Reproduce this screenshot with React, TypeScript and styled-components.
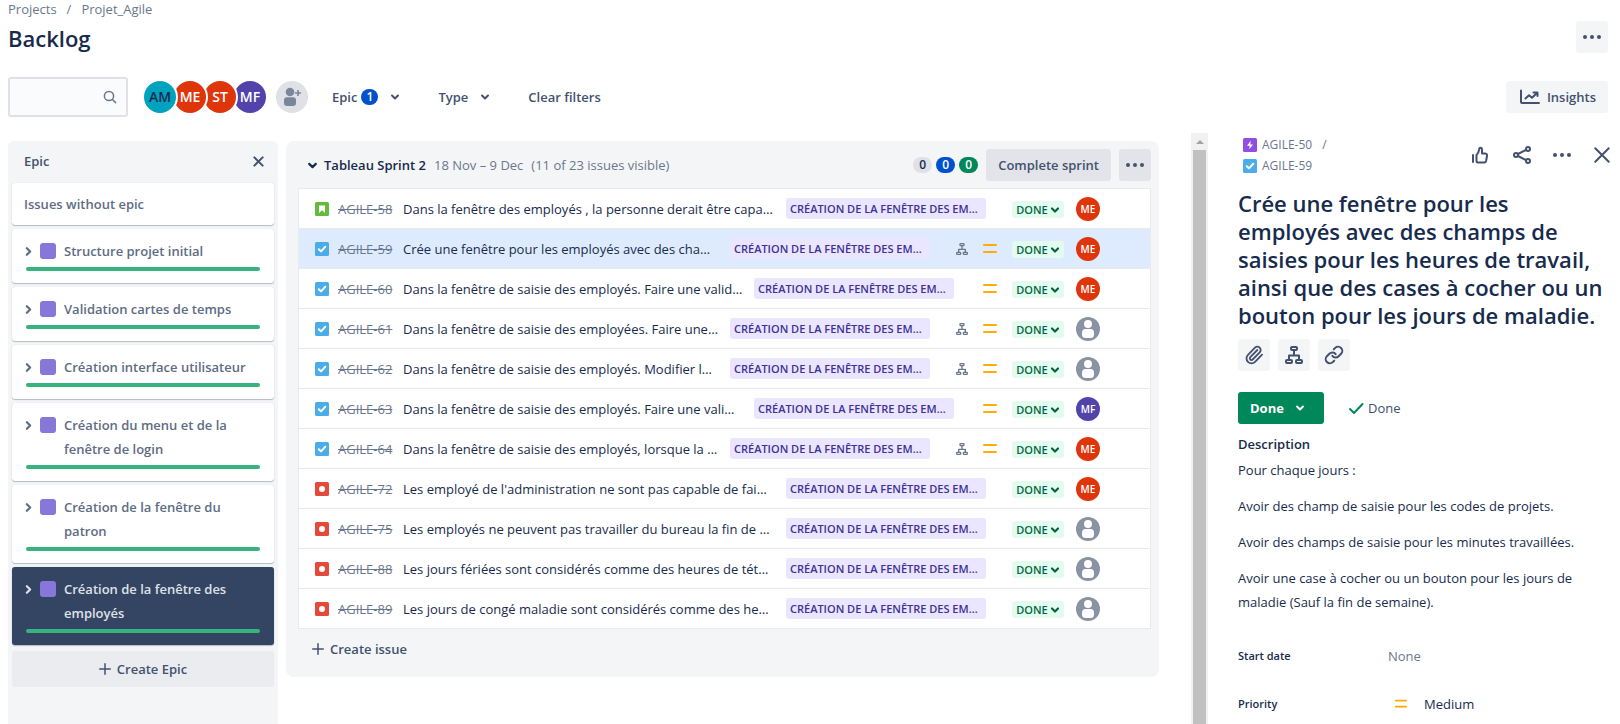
import React from "react";
import styled, { createGlobalStyle } from "styled-components";

const font = `"Open Sans", "Noto Sans", "Liberation Sans", sans-serif`;

const c = {
  ink: "#172B4D",
  text: "#42526E",
  muted: "#6B778C",
  panel: "#F4F5F7",
  line: "#E9EAEE",
  green: "#00875A",
  bar: "#36B37E",
  epic: "#8777D9",
};

const GlobalStyle = createGlobalStyle`
  *, *::before, *::after { box-sizing: border-box; }
  body { margin: 0; background: #fff; color: ${c.ink}; font: 13px/20px ${font}; }
  button, input { font: inherit; color: inherit; }
  button { border: 0; padding: 0; background: none; cursor: pointer; }
  a { color: inherit; text-decoration: none; }
  h1, h2, h3, p, ul, ol, dl, dd { margin: 0; padding: 0; list-style: none; }
  svg { display: block; flex: none; }
`;

/* ---------- icons ---------- */

const Chevron = ({ size = 10, dir = "down", width = 2 }: { size?: number; dir?: "down" | "right"; width?: number }) => (
  <svg width={size} height={size} viewBox="0 0 10 10" fill="none" stroke="currentColor" strokeWidth={width} strokeLinecap="round" strokeLinejoin="round">
    <path d={dir === "down" ? "M2 3.5 5 6.5 8 3.5" : "M3.5 2 6.5 5 3.5 8"} />
  </svg>
);

const Dots = () => (
  <svg width="20" height="20" viewBox="0 0 20 20" fill="currentColor">
    <circle cx="3" cy="10" r="2" />
    <circle cx="10" cy="10" r="2" />
    <circle cx="17" cy="10" r="2" />
  </svg>
);

const Cross = ({ size, width }: { size: number; width: number }) => (
  <svg width={size} height={size} viewBox="0 0 16 16" fill="none" stroke="currentColor" strokeWidth={width} strokeLinecap="round">
    <path d="M2 2 14 14M14 2 2 14" />
  </svg>
);

const Plus = () => (
  <svg width="12" height="12" viewBox="0 0 12 12" fill="none" stroke="currentColor" strokeWidth="1.5" strokeLinecap="round">
    <path d="M6 .75v10.5M.75 6h10.5" />
  </svg>
);

const SearchIcon = () => (
  <svg width="14" height="14" viewBox="0 0 14 14" fill="none" stroke={c.muted} strokeWidth="1.5" strokeLinecap="round">
    <circle cx="6" cy="6" r="4.6" />
    <path d="M9.5 9.5 12.6 12.6" />
  </svg>
);

const AddPerson = () => (
  <svg width="18" height="20" viewBox="0 0 18 20" fill="#7A869A">
    <circle cx="7" cy="5" r="4.3" />
    <path d="M1 13.2a3 3 0 0 1 3-3h6a3 3 0 0 1 3 3V16a3 3 0 0 1-3 3H4a3 3 0 0 1-3-3z" />
    <path d="M14.2 3h1.6v2.2H18v1.6h-2.2V9h-1.6V6.8h-2.2V5.2h2.2z" />
  </svg>
);

const ChartIcon = () => (
  <svg width="20" height="16" viewBox="0 0 20 16" fill="none" stroke="currentColor" strokeWidth="2" strokeLinecap="round" strokeLinejoin="round">
    <path d="M1 1.5V13a1 1 0 0 0 1 1H19" />
    <path d="M5.5 9.5 9 6.2l3 2.6L17 4M13.5 3.5H17.5V7" />
  </svg>
);

const Tile = ({ kind }: { kind: IssueKind | "epic" }) => {
  const fill = { story: "#63BA3C", task: "#4BADE8", bug: "#E5493A", epic: "#904EE2" }[kind];
  return (
    <svg width="14" height="14" viewBox="0 0 14 14">
      <rect width="14" height="14" rx="1.5" fill={fill} />
      {kind === "story" && <path d="M4 3.5h6v7.5L7 8.3 4 11z" fill="#fff" />}
      {kind === "task" && <path d="M3.8 7.3 6 9.4 10.3 4.7" fill="none" stroke="#fff" strokeWidth="2" strokeLinecap="round" strokeLinejoin="round" />}
      {kind === "bug" && <circle cx="7" cy="7" r="3" fill="#fff" />}
      {kind === "epic" && <path d="M7.7 2.8 4 7.7h2.7L6.3 11.2 10 6.4H7.3z" fill="#fff" />}
    </svg>
  );
};

const Tree = ({ size, color = "currentColor" }: { size: number; color?: string }) => (
  <svg width={size} height={size} viewBox="0 0 18 18" fill="none" stroke={color} strokeWidth="2" strokeLinejoin="round">
    <rect x="6" y="1" width="6" height="3" rx="1" />
    <rect x="1" y="14" width="6" height="3" rx="1" />
    <rect x="11" y="14" width="6" height="3" rx="1" />
    <path d="M9 4.5V9M4 14V9.5H14V14" />
  </svg>
);

const Medium = ({ size = 16 }: { size?: number }) => (
  <svg width={size} height={size} viewBox="0 0 16 16" fill="none" stroke="#FFAB00" strokeWidth="2" strokeLinecap="round">
    <path d="M2 4H14M2 11H14" />
  </svg>
);

const Nobody = () => (
  <svg width="24" height="24" viewBox="0 0 24 24">
    <circle cx="12" cy="12" r="12" fill="#8993A4" />
    <circle cx="12" cy="7" r="4" fill="#fff" />
    <rect x="6" y="12" width="12" height="9" rx="3.5" fill="#fff" />
  </svg>
);

const Thumb = () => (
  <svg width="20" height="18" viewBox="0 0 20 18" fill="none" stroke="currentColor" strokeWidth="2" strokeLinejoin="round" strokeLinecap="round">
    <path d="M1 9v7" />
    <path d="M4.500 9v6a1.500 1.500 0 0 0 1.500 1.500h6.200a2 2 0 0 0 1.900-1.500l.9-5a2 2 0 0 0-2-2.500H10V4c0-1.300-.6-2.200-1.500-2.200S7.200 2.500 7 4L6.300 6.500z" />
  </svg>
);

const Share = () => (
  <svg width="20" height="20" viewBox="0 0 20 20" fill="none" stroke="currentColor" strokeWidth="2">
    <circle cx="4" cy="10" r="2" />
    <circle cx="16" cy="4" r="2" />
    <circle cx="16" cy="16" r="2" />
    <path d="M6 9 14 5M6 11 14 15" />
  </svg>
);

const Clip = () => (
  <svg width="20" height="20" viewBox="0 0 24 24" fill="none" stroke="currentColor" strokeWidth="2.2" strokeLinecap="round">
    <path d="m16 6-8.414 8.586a2 2 0 0 0 2.829 2.829l8.414-8.586a4 4 0 1 0-5.657-5.657l-8.379 8.551a6 6 0 1 0 8.485 8.485l8.379-8.551" />
  </svg>
);

const LinkIcon = () => (
  <svg width="20" height="20" viewBox="0 0 24 24" fill="none" stroke="currentColor" strokeWidth="2.4" strokeLinecap="round">
    <path d="M10 13a5 5 0 0 0 7.54.54l3-3a5 5 0 0 0-7.07-7.07l-1.72 1.71" />
    <path d="M14 11a5 5 0 0 0-7.54-.54l-3 3a5 5 0 0 0 7.07 7.07l1.71-1.71" />
  </svg>
);

const Check = () => (
  <svg width="16" height="16" viewBox="0 0 16 16" fill="none" stroke={c.green} strokeWidth="2" strokeLinecap="round" strokeLinejoin="round">
    <path d="M2 9 6 13 14.5 4" />
  </svg>
);

/* ---------- page frame ---------- */

const Page = styled.div`
  min-height: 100vh;
  display: flex;
  flex-direction: column;
`;

const Top = styled.header`
  padding: 0 12px 0 8px;
`;

const Crumbs = styled.nav`
  display: flex;
  gap: 10px;
  height: 21px;
  line-height: 18px;
  color: ${c.muted};
`;

const TitleRow = styled.div`
  display: flex;
  align-items: center;
  justify-content: space-between;
  margin-bottom: 24px;
`;

const PageTitle = styled.h1`
  padding-top: 2px;
  font-size: 22px;
  line-height: 30px;
  font-weight: 600;
`;

const IconButton = styled.button<{ $tone?: string }>`
  width: 32px;
  height: 32px;
  display: grid;
  place-items: center;
  border-radius: 3px;
  color: ${c.text};
  background: ${(p) => p.$tone ?? "transparent"};
`;

const Filters = styled.div`
  display: flex;
  align-items: center;
  height: 40px;
  margin-bottom: 16px;
  color: ${c.text};
`;

const SearchBox = styled.label`
  display: flex;
  align-items: center;
  width: 120px;
  height: 40px;
  padding: 0 9px 0 6px;
  border: 2px solid #dfe1e6;
  border-radius: 3px;
  background: #fafbfc;

  input {
    flex: 1;
    min-width: 0;
    border: 0;
    outline: 0;
    background: transparent;
  }
`;

const Team = styled.div`
  display: flex;
  margin-left: 16px;
  gap: 10px;
`;

const Stack = styled.div`
  display: flex;
  isolation: isolate;
`;

const Avatar = styled.span<{ $bg: string; $fg?: string; $small?: boolean; $level?: number }>`
  position: relative;
  z-index: ${(p) => p.$level ?? 0};
  display: grid;
  place-items: center;
  flex: none;
  width: ${(p) => (p.$small ? 24 : 32)}px;
  height: ${(p) => (p.$small ? 24 : 32)}px;
  border-radius: 50%;
  background: ${(p) => p.$bg};
  color: ${(p) => p.$fg ?? "#fff"};
  font-size: ${(p) => (p.$small ? 10 : 14)}px;
  font-weight: 600;
  ${(p) => !p.$small && "box-shadow: 0 0 0 2px #fff; & + & { margin-left: -2px; }"}
`;

const AddPeople = styled(IconButton)`
  border-radius: 50%;
`;

const FilterButton = styled.button`
  display: flex;
  align-items: center;
  height: 32px;
  padding: 0 12px;
  gap: 12px;
  font-weight: 600;
`;

const FilterGroup = styled.div`
  display: flex;
  flex: 1;
  gap: 14px;
  margin-left: 12px;
`;

const FilterLabel = styled.span`
  display: flex;
  align-items: center;
  gap: 4px;
`;

const CountDot = styled.span`
  min-width: 17px;
  height: 16px;
  border-radius: 8px;
  background: #0052cc;
  color: #fff;
  font-size: 12px;
  line-height: 16px;
  font-weight: 600;
  text-align: center;
`;

const Insights = styled.button`
  display: flex;
  align-items: center;
  gap: 7px;
  height: 32px;
  padding: 0 12px 0 14px;
  border-radius: 3px;
  background: ${c.panel};
  font-weight: 600;
`;

const Main = styled.main`
  flex: 1;
  display: flex;
  padding-left: 8px;
`;

/* ---------- epic column ---------- */

const EpicPanel = styled.aside`
  flex: none;
  width: 270px;
  margin-top: 8px;
  padding: 0 4px;
  border-radius: 6px 6px 0 0;
  background: ${c.panel};
`;

const EpicHead = styled.div`
  display: flex;
  align-items: center;
  justify-content: space-between;
  height: 42px;
  padding: 0 8px 2px 12px;
  color: ${c.text};

  h2 {
    font-size: 13px;
    font-weight: 600;
  }
`;

const CloseSmall = styled.button`
  width: 16px;
  height: 16px;
  display: grid;
  place-items: center;
`;

const EpicList = styled.ul`
  display: flex;
  flex-direction: column;
  gap: 4px;
`;

const EpicCard = styled.li<{ $active?: boolean }>`
  padding: 10px 14px 12px;
  border-radius: 3px;
  background: ${(p) => (p.$active ? "#344563" : "#fff")};
  color: ${(p) => (p.$active ? "#DFE1E6" : "#5E6C84")};
  box-shadow: 0 1px 1px rgba(9, 30, 66, 0.25), 0 0 1px rgba(9, 30, 66, 0.2);
  font-weight: 600;
  line-height: 24px;
`;

const NoEpicCard = styled(EpicCard)`
  padding: 9px 12px;
`;

const EpicName = styled.div`
  display: flex;
  align-items: flex-start;

  button {
    height: 24px;
    margin: 0 6px 0 -3px;
  }
`;

const Swatch = styled.span`
  flex: none;
  width: 16px;
  height: 16px;
  margin: 4px 8px 0 0;
  border-radius: 3px;
  background: ${c.epic};
`;

const Progress = styled.div`
  height: 4px;
  margin-top: 4px;
  border-radius: 2px;
  background: ${c.bar};
`;

const CreateEpic = styled.button`
  display: flex;
  align-items: center;
  justify-content: center;
  gap: 6px;
  width: 100%;
  height: 36px;
  margin-top: 6px;
  border-radius: 3px;
  background: #ebecf0;
  color: ${c.text};
  font-weight: 600;
`;

/* ---------- sprint ---------- */

const Sprint = styled.section`
  flex: 1;
  min-width: 0;
  align-self: flex-start;
  margin: 8px 32px 0 8px;
  padding: 8px 8px 0 12px;
  border-radius: 8px;
  background: ${c.panel};
`;

const SprintHead = styled.div`
  display: flex;
  align-items: center;
  gap: 8px;
  margin-bottom: 7px;
  padding-left: 9px;
  color: ${c.muted};

  button {
    flex: none;
  }
`;

const SprintToggle = styled.button`
  display: flex;
  align-items: center;
  gap: 6px;
  color: ${c.ink};
  font-weight: 600;
`;

const Tallies = styled.div`
  display: flex;
  gap: 4px;
  margin-left: auto;
`;

const Tally = styled.span<{ $bg: string; $fg: string }>`
  width: 19px;
  height: 16px;
  border-radius: 8px;
  background: ${(p) => p.$bg};
  color: ${(p) => p.$fg};
  font-size: 12px;
  line-height: 16px;
  font-weight: 600;
  text-align: center;
`;

const SprintButton = styled.button`
  height: 32px;
  padding: 0 12px;
  border-radius: 3px;
  background: #e2e4e9;
  color: ${c.text};
  font-weight: 600;
`;

const IssueList = styled.ul`
  border: 1px solid ${c.line};
  border-bottom: 0;
  background: #fff;
`;

const Row = styled.li<{ $active?: boolean }>`
  display: flex;
  align-items: center;
  height: 40px;
  padding: 0 50px 0 16px;
  border-bottom: 1px solid ${c.line};
  background: ${(p) => (p.$active ? "#DEEBFF" : "#fff")};
`;

const Key = styled.a`
  flex: none;
  width: 57px;
  margin: 0 8px 0 9px;
  color: ${c.muted};
  text-decoration: line-through;
`;

const Summary = styled.span`
  flex: 1;
  min-width: 0;
  margin-right: 6px;
  overflow: hidden;
  white-space: nowrap;
`;

const EpicTag = styled.span`
  flex: none;
  width: 200px;
  height: 21px;
  margin-right: 26px;
  padding: 0 4px;
  border-radius: 3px;
  background: #eae6ff;
  color: #403294;
  font-size: 11px;
  line-height: 21px;
  font-weight: 600;
  white-space: nowrap;
  overflow: hidden;
`;

const Slot = styled.span<{ $w: number }>`
  flex: none;
  width: ${(p) => p.$w}px;
  padding-left: ${(p) => (p.$w > 24 ? 2 : 0)}px;
`;

const Status = styled.button`
  display: flex;
  align-items: center;
  justify-content: center;
  gap: 2px;
  flex: none;
  width: 52px;
  height: 17px;
  margin: 2px 12px 0 0;
  border-radius: 3px;
  background: #e3fcef;
  color: #006644;
  font-size: 11px;
  line-height: 16px;
  font-weight: 600;
`;

const CreateIssue = styled.button`
  display: flex;
  align-items: center;
  gap: 6px;
  height: 40px;
  margin-bottom: 8px;
  padding-left: 14px;
  color: ${c.text};
  font-weight: 600;
`;

/* ---------- detail ---------- */

const Track = styled.div`
  flex: none;
  display: flex;
  flex-direction: column;
  width: 17px;
  background: #f1f1f1;
`;

const TrackArrow = styled.div`
  display: grid;
  place-items: center;
  height: 17px;
`;

const TrackThumb = styled.div`
  flex: 1;
  margin: 0 2px;
  background: #c1c1c1;
`;

const Detail = styled.section`
  flex: none;
  width: 412px;
  padding: 0 2px 0 30px;
`;

const DetailHead = styled.div`
  display: flex;
  justify-content: space-between;
  height: 56px;
`;

const Path = styled.nav`
  display: flex;
  flex-direction: column;
  gap: 1px;
  padding: 2px 0 0 5px;
  color: ${c.muted};
  font-size: 12px;
`;

const PathItem = styled.div`
  display: flex;
  align-items: center;
  gap: 5px;

  span {
    margin-left: 5px;
  }
`;

const Actions = styled.div<{ $top: number }>`
  display: flex;
  gap: 8px;
  padding-top: ${(p) => p.$top}px;
`;

const IssueTitle = styled.h2`
  padding-right: 8px;
  font-size: 22px;
  line-height: 28px;
  font-weight: 600;
`;

const StateRow = styled.div`
  display: flex;
  align-items: center;
  gap: 24px;
  margin: 21px 0 8px;
  color: ${c.text};
`;

const StateButton = styled.button`
  display: flex;
  align-items: center;
  gap: 11px;
  width: 86px;
  height: 32px;
  padding: 0 12px;
  border-radius: 3px;
  background: ${c.green};
  color: #fff;
  font-weight: 700;
`;

const Resolution = styled.span`
  display: flex;
  align-items: center;
  gap: 4px;
`;

const Heading = styled.h3`
  font-size: 13px;
  line-height: 24px;
  font-weight: 600;
`;

const Prose = styled.div`
  margin: 2px 12px 30px 0;
  line-height: 24px;

  p + p {
    margin-top: 12px;
  }
`;

const Fields = styled.dl`
  display: grid;
  grid-template-columns: 150px 1fr;
  row-gap: 24px;
  line-height: 24px;

  dt {
    font-size: 11px;
    font-weight: 600;
  }
`;

const Unset = styled.dd`
  color: ${c.muted};
`;

const PriorityValue = styled.dd`
  display: flex;
  align-items: center;
  gap: 16px;
  padding-left: 6px;
`;

/* ---------- data ---------- */

type IssueKind = "story" | "task" | "bug";

interface Issue {
  id: number;
  kind: IssueKind;
  text: string;
  who?: "ME" | "MF";
  tree?: boolean;
  priority?: boolean;
  active?: boolean;
}

const people = [
  { id: "AM", bg: "#00A3BF", fg: c.ink },
  { id: "ME", bg: "#DE350B" },
  { id: "ST", bg: "#DE350B" },
  { id: "MF", bg: "#5243AA" },
];

const epics = [
  "Structure projet initial",
  "Validation cartes de temps",
  "Création interface utilisateur",
  "Création du menu et de la fenêtre de login",
  "Création de la fenêtre du patron",
  "Création de la fenêtre des employés",
];

const issues: Issue[] = [
  { id: 58, kind: "story", text: "Dans la fenêtre des employés , la personne derait être capa…", who: "ME" },
  { id: 59, kind: "task", text: "Crée une fenêtre pour les employés avec des cha…", who: "ME", tree: true, priority: true, active: true },
  { id: 60, kind: "task", text: "Dans la fenêtre de saisie des employés. Faire une valid…", who: "ME", priority: true },
  { id: 61, kind: "task", text: "Dans la fenêtre de saisie des employées. Faire une…", tree: true, priority: true },
  { id: 62, kind: "task", text: "Dans la fenêtre de saisie des employés. Modifier l…", tree: true, priority: true },
  { id: 63, kind: "task", text: "Dans la fenêtre de saisie des employés. Faire une vali…", who: "MF", priority: true },
  { id: 64, kind: "task", text: "Dans la fenêtre de saisie des employés, lorsque la …", who: "ME", tree: true, priority: true },
  { id: 72, kind: "bug", text: "Les employé de l'administration ne sont pas capable de fai…", who: "ME" },
  { id: 75, kind: "bug", text: "Les employés ne peuvent pas travailler du bureau la fin de …" },
  { id: 88, kind: "bug", text: "Les jours fériées sont considérés comme des heures de tét…" },
  { id: 89, kind: "bug", text: "Les jours de congé maladie sont considérés comme des he…" },
];

const IssueRow = ({ issue }: { issue: Issue }) => (
  <Row $active={issue.active}>
    <Tile kind={issue.kind} />
    <Key href={`#AGILE-${issue.id}`}>AGILE-{issue.id}</Key>
    <Summary>{issue.text}</Summary>
    <EpicTag>CRÉATION DE LA FENÊTRE DES EM…</EpicTag>
    {issue.tree && (
      <Slot $w={24}>
        <Tree size={12} color={c.muted} />
      </Slot>
    )}
    {issue.priority && (
      <Slot $w={32}>
        <Medium />
      </Slot>
    )}
    <Status>
      DONE
      <Chevron size={10} width={2.2} />
    </Status>
    {issue.who ? (
      <Avatar $small $bg={issue.who === "ME" ? "#DE350B" : "#5243AA"}>
        {issue.who}
      </Avatar>
    ) : (
      <Nobody />
    )}
  </Row>
);

export default function App() {
  return (
    <Page>
      <GlobalStyle />
      <Top>
        <Crumbs aria-label="Breadcrumb">
          <a href="#projects">Projects</a>
          <span>/</span>
          <a href="#project">Projet_Agile</a>
        </Crumbs>
        <TitleRow>
          <PageTitle>Backlog</PageTitle>
          <IconButton $tone={c.panel} aria-label="More actions">
            <Dots />
          </IconButton>
        </TitleRow>
        <Filters>
          <SearchBox>
            <input type="text" aria-label="Search backlog" />
            <SearchIcon />
          </SearchBox>
          <Team>
            <Stack>
              {people.map((p, i) => (
                <Avatar key={p.id} $bg={p.bg} $fg={p.fg} $level={people.length - i}>
                  {p.id}
                </Avatar>
              ))}
            </Stack>
            <AddPeople $tone="#DFE1E6" aria-label="Add people">
              <AddPerson />
            </AddPeople>
          </Team>
          <FilterGroup>
            <FilterButton>
              <FilterLabel>
                Epic <CountDot>1</CountDot>
              </FilterLabel>
              <Chevron />
            </FilterButton>
            <FilterButton>
              Type
              <Chevron />
            </FilterButton>
            <FilterButton>Clear filters</FilterButton>
          </FilterGroup>
          <Insights>
            <ChartIcon />
            Insights
          </Insights>
        </Filters>
      </Top>

      <Main>
        <EpicPanel>
          <EpicHead>
            <h2>Epic</h2>
            <CloseSmall aria-label="Close epic panel">
              <Cross size={11} width={3} />
            </CloseSmall>
          </EpicHead>
          <EpicList>
            <NoEpicCard>Issues without epic</NoEpicCard>
            {epics.map((name, i) => (
              <EpicCard key={name} $active={i === epics.length - 1}>
                <EpicName>
                  <button aria-label={`Expand ${name}`}>
                    <Chevron size={11} dir="right" />
                  </button>
                  <Swatch />
                  <span>{name}</span>
                </EpicName>
                <Progress />
              </EpicCard>
            ))}
          </EpicList>
          <CreateEpic>
            <Plus />
            Create Epic
          </CreateEpic>
        </EpicPanel>

        <Sprint>
          <SprintHead>
            <SprintToggle>
              <Chevron size={11} />
              Tableau Sprint 2
            </SprintToggle>
            <span>18 Nov – 9 Dec</span>
            <span>(11 of 23 issues visible)</span>
            <Tallies>
              <Tally $bg="#DFE1E6" $fg={c.ink}>0</Tally>
              <Tally $bg="#0052CC" $fg="#fff">0</Tally>
              <Tally $bg={c.green} $fg="#fff">0</Tally>
            </Tallies>
            <SprintButton>Complete sprint</SprintButton>
            <IconButton $tone="#E2E4E9" aria-label="Sprint actions">
              <Dots />
            </IconButton>
          </SprintHead>
          <IssueList>
            {issues.map((issue) => (
              <IssueRow key={issue.id} issue={issue} />
            ))}
          </IssueList>
          <CreateIssue>
            <Plus />
            Create issue
          </CreateIssue>
        </Sprint>

        <Track aria-hidden="true">
          <TrackArrow>
            <svg width="8" height="4" viewBox="0 0 8 4" fill="#A3A3A3">
              <path d="M4 0 8 4H0z" />
            </svg>
          </TrackArrow>
          <TrackThumb />
        </Track>

        <Detail>
          <DetailHead>
            <Path aria-label="Issue path">
              <PathItem>
                <Tile kind="epic" />
                <a href="#AGILE-50">AGILE-50</a>
                <span>/</span>
              </PathItem>
              <PathItem>
                <Tile kind="task" />
                <a href="#AGILE-59">AGILE-59</a>
              </PathItem>
            </Path>
            <Actions $top={6}>
              <IconButton aria-label="Vote">
                <Thumb />
              </IconButton>
              <IconButton aria-label="Share">
                <Share />
              </IconButton>
              <IconButton aria-label="More">
                <Dots />
              </IconButton>
              <IconButton aria-label="Close">
                <Cross size={18} width={1.8} />
              </IconButton>
            </Actions>
          </DetailHead>
          <IssueTitle>
            Crée une fenêtre pour les employés avec des champs de saisies pour les heures de travail, ainsi que des
            cases à cocher ou un bouton pour les jours de maladie.
          </IssueTitle>
          <Actions $top={10}>
            <IconButton $tone={c.panel} aria-label="Attach">
              <Clip />
            </IconButton>
            <IconButton $tone={c.panel} aria-label="Add a child issue">
              <Tree size={18} />
            </IconButton>
            <IconButton $tone={c.panel} aria-label="Link issue">
              <LinkIcon />
            </IconButton>
          </Actions>
          <StateRow>
            <StateButton>
              Done
              <Chevron />
            </StateButton>
            <Resolution>
              <Check />
              Done
            </Resolution>
          </StateRow>
          <Heading>Description</Heading>
          <Prose>
            <p>Pour chaque jours :</p>
            <p>Avoir des champ de saisie pour les codes de projets.</p>
            <p>Avoir des champs de saisie pour les minutes travaillées.</p>
            <p>Avoir une case à cocher ou un bouton pour les jours de maladie (Sauf la fin de semaine).</p>
          </Prose>
          <Fields>
            <dt>Start date</dt>
            <Unset>None</Unset>
            <dt>Priority</dt>
            <PriorityValue>
              <Medium size={14} />
              Medium
            </PriorityValue>
          </Fields>
        </Detail>
      </Main>
    </Page>
  );
}
